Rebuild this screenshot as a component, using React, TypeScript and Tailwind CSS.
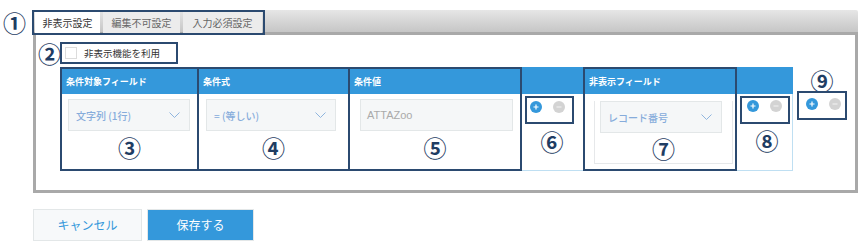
import React from "react";

const NAVY = "border-[#2b4a70]";

function Num({ n, className = "" }: { n: string; className?: string }) {
    return (
        <span className={`block text-center text-[23px] font-bold leading-[20px] text-[#1f3d63] ${className}`}>{n}</span>
    );
}

function PlusMinus() {
    return (
        <div className="flex items-center gap-[11px]">
            <span className="w-[12px] h-[12px] rounded-full bg-[#3498db] flex items-center justify-center">
                <svg width="6" height="6" viewBox="0 0 6 6">
                    <path d="M3 0.5v5M0.5 3h5" stroke="#fff" strokeWidth="1.2" />
                </svg>
            </span>
            <span className="w-[12px] h-[12px] rounded-full bg-[#d3d3d3] flex items-center justify-center">
                <svg width="6" height="6" viewBox="0 0 6 6">
                    <path d="M0.5 3h5" stroke="#eee" strokeWidth="1.2" />
                </svg>
            </span>
        </div>
    );
}

function Select({ label, className = "" }: { label: string; className?: string }) {
    return (
        <div className={`h-[32px] bg-[#f5f7f8] border border-[#e3e7e8] flex items-center justify-between pl-[7px] pr-[9px] ${className}`}>
            <span className="text-[10px] font-medium text-[#86acdb]">{label}</span>
            <svg width="11" height="6" viewBox="0 0 11 6">
                <path d="M0.5 0.5l5 5 5-5" fill="none" stroke="#8fb5de" strokeWidth="1" />
            </svg>
        </div>
    );
}

function Header({ title }: { title?: string }) {
    return (
        <div className="h-[25px] bg-[#3498db] flex items-center px-[4px] text-[9px] font-bold text-white">
            {title}
        </div>
    );
}

export default function App() {
    return (
        <div
            className="w-[866px] h-[247px] bg-white relative pt-[10px] overflow-hidden"
            style={{ fontFamily: '"Noto Sans CJK JP", "Noto Sans", sans-serif' }}
        >
            {/* ① */}
            <Num n="①" className="absolute left-[3px] top-[12px] w-[22px]" />

            <div className="ml-[33px] w-[825px]">
                {/* Tab bar */}
                <div className="h-[25px] bg-gradient-to-b from-[#e6e6e6] to-[#c6c6c6] border-b-[3px] border-[#a9a9a9] rounded-tr-[2px] relative">
                    <div className={`absolute left-[-1px] top-0 h-[25px] w-[233px] border-2 ${NAVY} flex items-end gap-[3px] pl-[1px]`}>
                        <div className="h-[21px] w-[65px] bg-white flex items-center justify-center text-[10px] text-[#333]">非表示設定</div>
                        <div className="h-[21px] w-[77px] bg-[#ececec] flex items-center justify-center text-[10px] text-[#666]">編集不可設定</div>
                        <div className="h-[21px] w-[79px] bg-[#ececec] flex items-center justify-center text-[10px] text-[#666]">入力必須設定</div>
                    </div>
                </div>

                {/* Panel */}
                <div className="h-[158px] border-x-[3px] border-b-[3px] border-[#a9a9a9] pl-[2px] pt-[7px]">
                    <div className="flex items-center">
                        <Num n="②" className="w-[22px]" />
                        <div className={`h-[22px] w-[118px] border-2 ${NAVY} flex items-center pl-[3px] gap-[7px]`}>
                            <span className="w-[12px] h-[12px] border border-[#dcdcdc] bg-white" />
                            <span className="text-[9.5px] text-[#333]">非表示機能を利用</span>
                        </div>
                    </div>

                    <div className="flex items-start mt-[3px] ml-[22px]">
                        {/* col1 */}
                        <div className={`w-[139px] h-[104px] border-2 ${NAVY}`}>
                            <Header title="条件対象フィールド" />
                            <Select label="文字列 (1行)" className="mt-[5px] ml-[6px] w-[122px]" />
                            <Num n="③" className="mt-[6px]" />
                        </div>
                        {/* col2 */}
                        <div className={`w-[153px] h-[104px] border-2 ${NAVY} -ml-[2px]`}>
                            <Header title="条件式" />
                            <Select label="= (等しい)" className="mt-[5px] ml-[7px] w-[130px]" />
                            <Num n="④" className="mt-[6px]" />
                        </div>
                        {/* col3 */}
                        <div className={`w-[174px] h-[104px] border-2 ${NAVY} -ml-[2px]`}>
                            <Header title="条件値" />
                            <div className="mt-[5px] ml-[10px] w-[153px] h-[32px] bg-[#f5f7f8] border border-[#e3e7e8] flex items-center pl-[6px]">
                                <span className="text-[11px] text-[#aaa]" style={{ fontFamily: '"Liberation Sans", sans-serif' }}>ATTAZoo</span>
                            </div>
                            <Num n="⑤" className="mt-[6px]" />
                        </div>
                        {/* col4 */}
                        <div className="w-[61px] h-[104px]">
                            <div className="h-[27px] bg-[#3498db]" />
                            <div className="h-[77px] border-b border-[#bfdff2] pt-[2px] pl-[3px]">
                                <div className={`w-[49px] h-[28px] border-2 ${NAVY} pl-[3px] pt-[3px]`}>
                                    <PlusMinus />
                                </div>
                                <Num n="⑥" className="mt-[7px] w-[54px]" />
                            </div>
                        </div>
                        {/* col5 */}
                        <div className={`w-[154px] h-[104px] border-2 ${NAVY}`}>
                            <Header title="非表示フィールド" />
                            <div className="ml-[9px] w-[139px] h-[63px] border border-t-0 border-[#e6e8ea]">
                                <Select label="レコード番号" className="mt-[7px] ml-[5px] w-[122px]" />
                                <Num n="⑦" className="mt-[5px]" />
                            </div>
                        </div>
                        {/* col6 */}
                        <div className="w-[56px] h-[104px]">
                            <div className="h-[27px] bg-[#3498db]" />
                            <div className="h-[77px] border-b border-r border-[#bfdff2] pt-[2px] pl-[3px]">
                                <div className={`w-[50px] h-[28px] border-2 ${NAVY} pl-[5px] pt-[2px]`}>
                                    <PlusMinus />
                                </div>
                                <Num n="⑧" className="mt-[6px] w-[54px]" />
                            </div>
                        </div>
                        {/* ⑨ */}
                        <div className="ml-[4px] w-[50px] flex flex-col items-center">
                            <Num n="⑨" className="mt-[3px] w-[50px]" />
                            <div className={`mt-[1px] w-[50px] h-[29px] border-2 ${NAVY} pl-[7px] pt-[5px]`}>
                                <PlusMinus />
                            </div>
                        </div>
                    </div>
                </div>

                {/* Buttons */}
                <div className="flex gap-[5px] mt-[16px]">
                    <button className="w-[109px] h-[32px] bg-[#f7f9fa] border border-[#e3e7e8] text-[12px] text-[#3498db]">キャンセル</button>
                    <button className="w-[107px] h-[32px] bg-[#3498db] border border-[#e3e7e8] text-[12px] text-white">保存する</button>
                </div>
            </div>
        </div>
    );
}
